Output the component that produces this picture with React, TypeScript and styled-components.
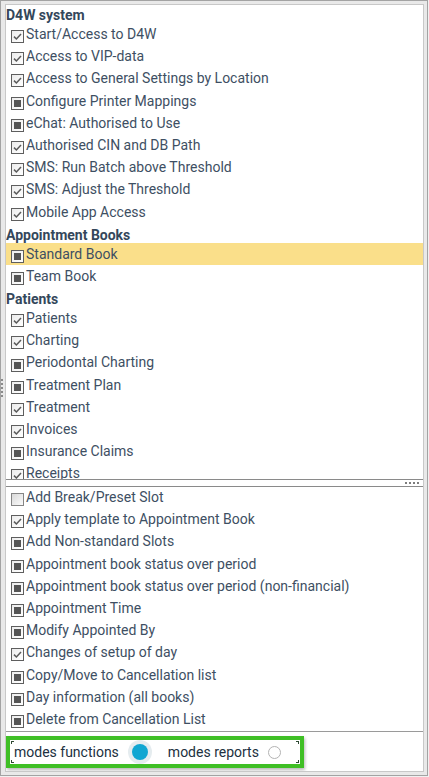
import React from 'react';
import styled, { createGlobalStyle, css } from 'styled-components';

type CheckState = 'on' | 'part' | 'off';
interface Item {
  label: string;
  state: CheckState;
  selected?: boolean;
}
interface Group {
  title: string;
  items: Item[];
}

const upperGroups: Group[] = [
  {
    title: 'D4W system',
    items: [
      { label: 'Start/Access to D4W', state: 'on' },
      { label: 'Access to VIP-data', state: 'on' },
      { label: 'Access to General Settings by Location', state: 'on' },
      { label: 'Configure Printer Mappings', state: 'part' },
      { label: 'eChat: Authorised to Use', state: 'part' },
      { label: 'Authorised CIN and DB Path', state: 'on' },
      { label: 'SMS: Run Batch above Threshold', state: 'on' },
      { label: 'SMS: Adjust the Threshold', state: 'on' },
      { label: 'Mobile App Access', state: 'on' },
    ],
  },
  {
    title: 'Appointment Books',
    items: [
      { label: 'Standard Book', state: 'part', selected: true },
      { label: 'Team Book', state: 'part' },
    ],
  },
  {
    title: 'Patients',
    items: [
      { label: 'Patients', state: 'on' },
      { label: 'Charting', state: 'on' },
      { label: 'Periodontal Charting', state: 'part' },
      { label: 'Treatment Plan', state: 'part' },
      { label: 'Treatment', state: 'on' },
      { label: 'Invoices', state: 'on' },
      { label: 'Insurance Claims', state: 'part' },
      { label: 'Receipts', state: 'on' },
    ],
  },
];

const lowerItems: Item[] = [
  { label: 'Add Break/Preset Slot', state: 'off' },
  { label: 'Apply template to Appointment Book', state: 'on' },
  { label: 'Add Non-standard Slots', state: 'part' },
  { label: 'Appointment book status over period', state: 'part' },
  { label: 'Appointment book status over period (non-financial)', state: 'part' },
  { label: 'Appointment Time', state: 'part' },
  { label: 'Modify Appointed By', state: 'part' },
  { label: 'Changes of setup of day', state: 'on' },
  { label: 'Copy/Move to Cancellation list', state: 'part' },
  { label: 'Day information (all books)', state: 'part' },
  { label: 'Delete from Cancellation List', state: 'part' },
];

const GlobalStyle = createGlobalStyle`
  html, body {
    margin: 0;
    padding: 0;
    background: #f1f1f1;
  }
  body {
    font-family: Roboto, "Liberation Sans", Arial, sans-serif;
  }
`;

const Frame = styled.div`
  position: relative;
  box-sizing: border-box;
  width: 428px;
  height: 776px;
  border: 1px solid #a3a3a3;
  background: #e9e9e9;
  padding: 3px 3px 3px 4px;
  display: flex;
`;

const Grip = styled.div`
  position: absolute;
  left: 0;
  top: 378px;
  width: 2px;
  height: 19px;
  background: repeating-linear-gradient(
    to bottom,
    #8a8a8a 0 2px,
    transparent 2px 4px
  );
`;

const Panel = styled.div`
  flex: 1;
  display: flex;
  flex-direction: column;
  border: 1px solid #c8c8c8;
  background: #ffffff;
  overflow: hidden;
`;

const Pane = styled.div<{ $height: number }>`
  height: ${(p) => p.$height}px;
  flex: none;
  overflow: hidden;
`;

const PaneBody = styled.div<{ $shift: number }>`
  display: flex;
  flex-direction: column;
  margin-top: ${(p) => p.$shift}px;
`;

const GroupTitle = styled.div`
  box-sizing: border-box;
  height: 20px;
  padding-top: 4px;
  line-height: 16px;
  font-size: 14px;
  font-weight: 700;
  color: #34475b;
  white-space: nowrap;
`;

const Row = styled.div<{ $selected?: boolean }>`
  display: flex;
  align-items: center;
  gap: 2px;
  height: 22.2px;
  padding-left: 5px;
  background: ${(p) => (p.$selected ? '#fadf8a' : 'transparent')};
`;

const Box = styled.span<{ $state: CheckState }>`
  box-sizing: border-box;
  flex: none;
  width: 13px;
  height: 13px;
  margin-top: 5px;
  display: flex;
  align-items: center;
  justify-content: center;
  border: 1px solid #5e5e5e;
  background: linear-gradient(135deg, #ececec, #ffffff);
  ${(p) =>
    p.$state === 'off' &&
    css`
      border-color: #858585;
      background: linear-gradient(135deg, #d9d9d9, #fbfbfb);
    `}
`;

const PartFill = styled.span`
  width: 7px;
  height: 7px;
  background: #555555;
`;

const Label = styled.span`
  font-size: 14px;
  line-height: 22.2px;
  color: #3e4f63;
  white-space: nowrap;
`;

const Splitter = styled.div`
  box-sizing: border-box;
  flex: none;
  height: 8px;
  margin-left: 0;
  border-top: 1px solid #8a8a8a;
  border-bottom: 1px solid #8a8a8a;
  display: flex;
  align-items: center;
  justify-content: flex-end;
  gap: 2px;
  padding-right: 4px;
`;

const Dot = styled.span`
  width: 2px;
  height: 2px;
  background: #7d7d7d;
`;

const Footer = styled.div`
  box-sizing: border-box;
  flex: none;
  height: 40px;
  border-top: 1px solid #9a9a9a;
  padding: 4px 0 0 0;
`;

const Outline = styled.div`
  box-sizing: border-box;
  width: 298px;
  height: 32px;
  border: 4px solid #3fbf25;
  box-shadow: 1px 2px 3px rgba(0, 0, 0, 0.28);
  background: #ffffff;
`;

const mark = (pos: string, size: string) =>
  `linear-gradient(#2f4a33, #2f4a33) ${pos} / ${size} no-repeat`;

const RadioGroup = styled.div`
  box-sizing: border-box;
  height: 100%;
  display: flex;
  align-items: center;
  gap: 16px;
  padding-left: 4px;
  background: ${[
    mark('left 1px top 1px', '3px 1px'),
    mark('left 1px top 1px', '1px 3px'),
    mark('right 1px top 1px', '3px 1px'),
    mark('right 1px top 1px', '1px 3px'),
    mark('left 1px bottom 1px', '3px 1px'),
    mark('left 1px bottom 1px', '1px 3px'),
    mark('right 1px bottom 1px', '3px 1px'),
    mark('right 1px bottom 1px', '1px 3px'),
  ].join(', ')};
`;

const RadioOption = styled.label`
  display: flex;
  align-items: center;
  gap: 9px;
`;

const RadioText = styled.span`
  font-size: 14px;
  line-height: 18px;
  color: #213040;
  white-space: nowrap;
`;

const Radio = styled.span<{ $checked?: boolean }>`
  box-sizing: border-box;
  flex: none;
  border-radius: 50%;
  ${(p) =>
    p.$checked
      ? css`
          width: 16px;
          height: 16px;
          margin: 0 4px;
          background: #10a6d2;
          box-shadow: 0 0 0 4px #e5ecef;
        `
      : css`
          width: 13px;
          height: 13px;
          border: 1.5px solid #b3b3b3;
          background: #ffffff;
        `}
`;

const CheckMark: React.FC = () => (
  <svg width="11" height="11" viewBox="0 0 11 11">
    <path
      d="M2 5.6 L4.4 8 L9 3"
      fill="none"
      stroke="#5a5a5a"
      strokeWidth="1.5"
    />
  </svg>
);

const CheckBox: React.FC<{ state: CheckState }> = ({ state }) => (
  <Box $state={state}>
    {state === 'on' && <CheckMark />}
    {state === 'part' && <PartFill />}
  </Box>
);

const ItemRow: React.FC<{ item: Item }> = ({ item }) => (
  <Row $selected={item.selected}>
    <CheckBox state={item.state} />
    <Label>{item.label}</Label>
  </Row>
);

export default function App() {
  return (
    <>
      <GlobalStyle />
      <Frame>
        <Grip />
        <Panel>
          <Pane $height={474}>
            <PaneBody $shift={-2}>
              {upperGroups.map((g) => (
                <React.Fragment key={g.title}>
                  <GroupTitle>{g.title}</GroupTitle>
                  {g.items.map((it) => (
                    <ItemRow key={it.label} item={it} />
                  ))}
                </React.Fragment>
              ))}
            </PaneBody>
          </Pane>
          <Splitter>
            <Dot />
            <Dot />
            <Dot />
            <Dot />
          </Splitter>
          <Pane $height={244}>
            <PaneBody $shift={-1}>
              {lowerItems.map((it) => (
                <ItemRow key={it.label} item={it} />
              ))}
            </PaneBody>
          </Pane>
          <Footer>
            <Outline>
              <RadioGroup>
                <RadioOption>
                  <RadioText>modes functions</RadioText>
                  <Radio $checked />
                </RadioOption>
                <RadioOption>
                  <RadioText>modes reports</RadioText>
                  <Radio />
                </RadioOption>
              </RadioGroup>
            </Outline>
          </Footer>
        </Panel>
      </Frame>
    </>
  );
}
